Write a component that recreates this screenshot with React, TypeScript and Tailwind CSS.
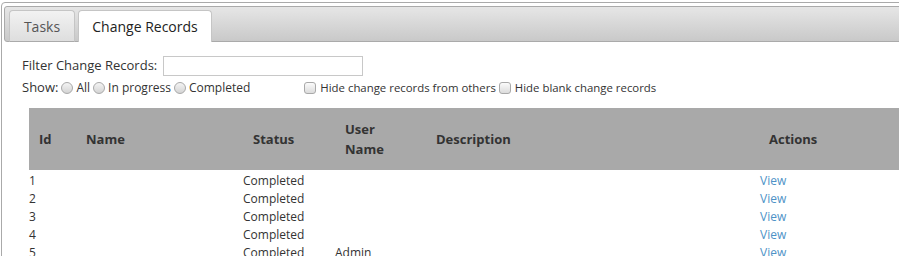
import React from 'react'

const rows = [
  { id: 1, status: 'Completed', user: '' },
  { id: 2, status: 'Completed', user: '' },
  { id: 3, status: 'Completed', user: '' },
  { id: 4, status: 'Completed', user: '' },
  { id: 5, status: 'Completed', user: 'Admin' },
]

const cols = 'grid grid-cols-[47px_167px_92px_91px_334px_120px]'

const Radio = () => (
  <span className="inline-block w-[12px] h-[12px] rounded-full border border-[#a9a9a9] bg-gradient-to-b from-[#f4f4f4] to-[#d4d4d4] mx-[3px] shrink-0" />
)

const Check = () => (
  <span className="inline-block w-[12px] h-[12px] rounded-[3px] border border-[#a9a9a9] bg-gradient-to-b from-[#fbfbfb] to-[#dcdcdc] mr-[4px] shrink-0" />
)

export default function App() {
  return (
    <div className="w-[899px] h-[256px] overflow-hidden bg-white font-['Open_Sans',sans-serif] text-[#333]">
      <div className="ml-[1px] mt-[2px] w-[1000px] h-[300px] border border-[#aaa] rounded-[4px] p-[2px]">
        {/* tab bar */}
        <div className="h-[36px] mt-[1px] border border-[#aaa] rounded-[3px] bg-gradient-to-b from-[#e6e6e6] to-[#c9c9c9] flex items-end gap-[3px] pl-[4px]">
          <div className="w-[66px] h-[32px] -mb-[1px] border border-[#c5c5c5] border-b-[#aaa] rounded-t-[4px] bg-gradient-to-b from-[#f2f2f2] to-[#dedede] flex items-center justify-center text-[14px] text-[#555]">
            Tasks
          </div>
          <div className="w-[134px] h-[32px] -mb-[1px] border border-[#c5c5c5] border-b-0 rounded-t-[4px] bg-white flex items-center justify-center text-[14px] text-[#222]">
            Change Records
          </div>
        </div>

        {/* content */}
        <div className="pl-[18px]">
          <div className="mt-[14px] flex items-center h-[20px] text-[13px]">
            <span>Filter Change Records:</span>
            <span className="ml-[6px] w-[200px] h-[20px] border border-[#c8c8c8] bg-white" />
          </div>
          <div className="mt-[4px] flex items-center h-[16px] text-[12px]">
            <span className="text-[13px]">Show:</span>
            <Radio />
            <span>All</span>
            <Radio />
            <span>In progress</span>
            <Radio />
            <span>Completed</span>
            <span className="ml-[54px] flex items-center text-[11.4px]">
              <Check />
              <span>Hide change records from others</span>
            </span>
            <span className="ml-[3px] flex items-center text-[11.4px]">
              <Check />
              <span>Hide blank change records</span>
            </span>
          </div>

          {/* table */}
          <div className="ml-[7px] mt-[12px]">
            <div className={`${cols} h-[62px] bg-[#a9a9a9] items-center font-bold text-[13px] text-[#333] leading-[20px]`}>
              <div className="pl-[10px]">Id</div>
              <div className="pl-[10px]">Name</div>
              <div className="pl-[10px]">Status</div>
              <div className="pl-[10px]">User<br />Name</div>
              <div className="pl-[10px]">Description</div>
              <div className="pl-[9px]">Actions</div>
            </div>
            <div className="pt-[2px]">
              {rows.map((r) => (
                <div key={r.id} className={`${cols} h-[18px] items-center text-[12px] text-[#333]`}>
                  <div>{r.id}</div>
                  <div />
                  <div>{r.status}</div>
                  <div>{r.user}</div>
                  <div />
                  <div className="text-[#4d92c7]">View</div>
                </div>
              ))}
            </div>
          </div>
        </div>
      </div>
    </div>
  )
}
